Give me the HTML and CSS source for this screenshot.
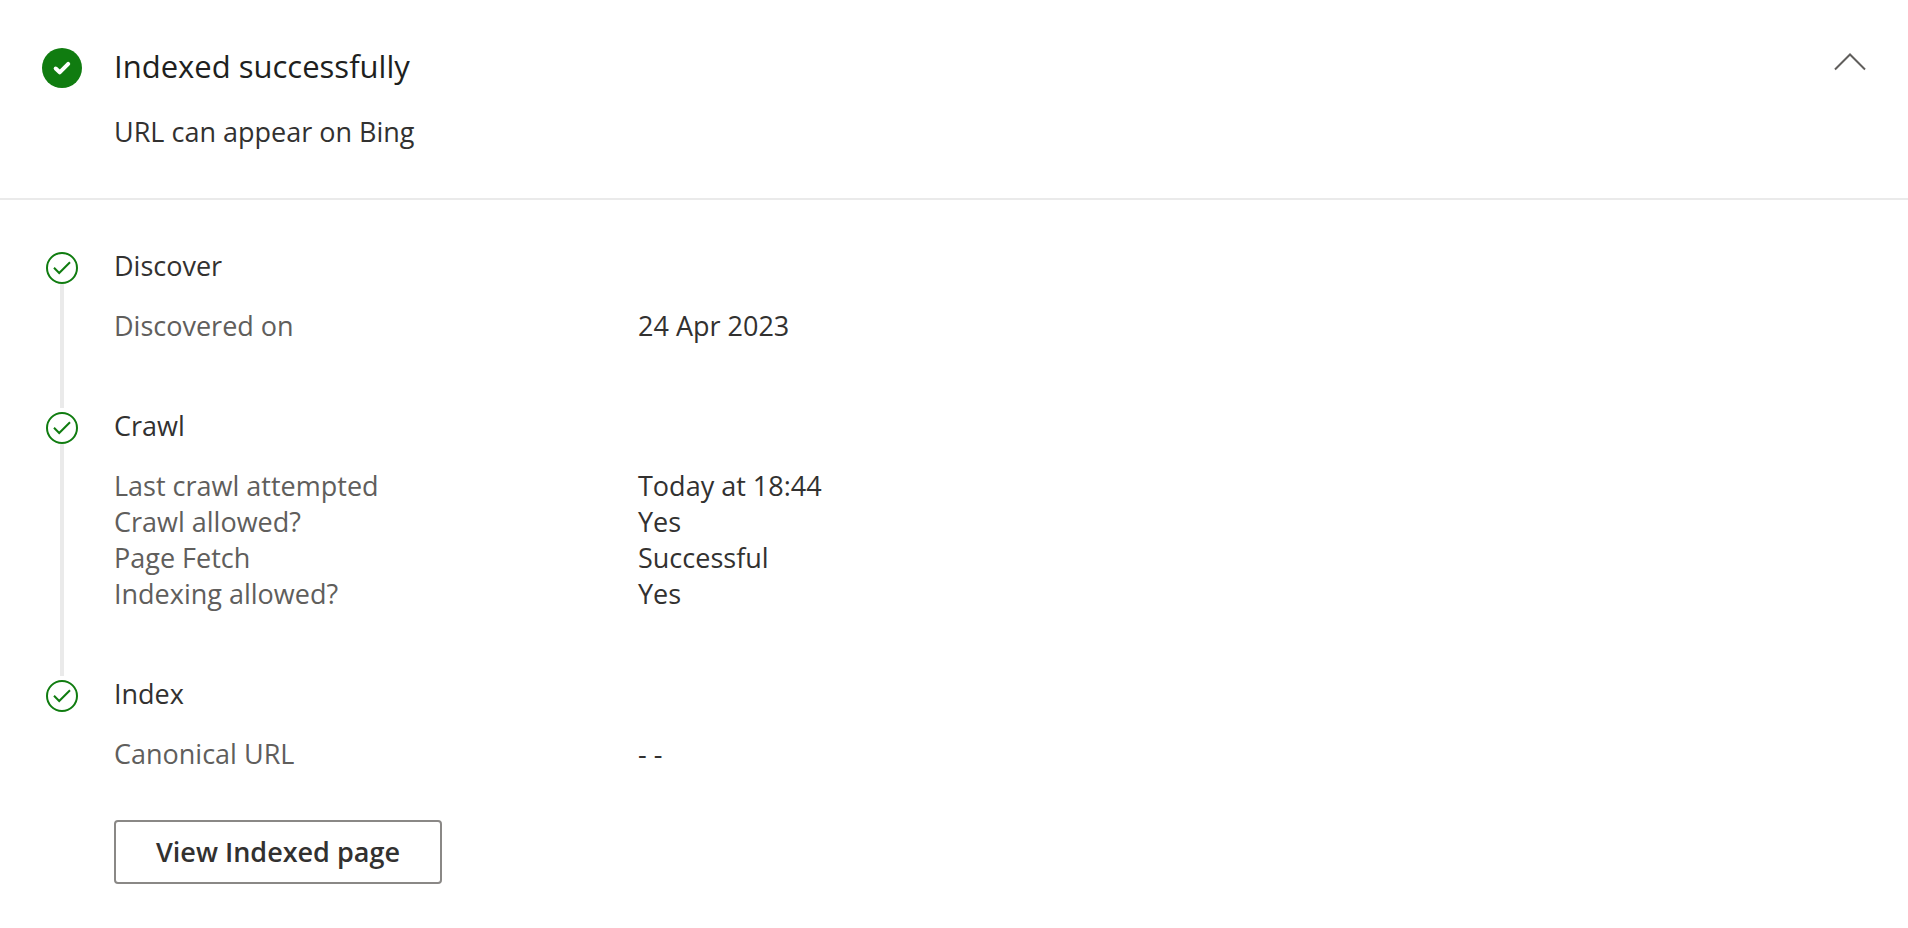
FILE: index.html
```
<!DOCTYPE html>
<html lang="en">
    <head>
        <meta charset="utf-8">
        <title>URL Inspection</title>
        <link rel="stylesheet" href="styles.css">
    </head>
    <body>
        <header class="summary">
            <svg class="status-icon" viewBox="0 0 40 40" aria-hidden="true">
                <circle cx="20" cy="20" r="20"/>
                <path d="M13.7 20.5 L17.7 24.3 L26.2 15.8"/>
            </svg>
            <div class="summary-text">
                <h1 class="title">Indexed successfully</h1>
                <p class="subtitle">URL can appear on Bing</p>
            </div>
            <button class="collapse" aria-label="Collapse">
                <svg viewBox="0 0 32 18" aria-hidden="true">
                    <path d="M1 16.5 L16 1.5 L31 16.5"/>
                </svg>
            </button>
        </header>
        <main class="steps">
            <section class="step">
                <div class="marker">
                    <svg viewBox="0 0 32 32" aria-hidden="true">
                        <circle cx="16" cy="16" r="15"/>
                        <path d="M8 15.8 L13.2 21 L24 10.2"/>
                    </svg>
                    <div class="line"></div>
                </div>
                <div class="step-body">
                    <h2 class="step-title">Discover</h2>
                    <dl class="details">
                        <dt>Discovered on</dt>
                        <dd>24 Apr 2023</dd>
                    </dl>
                </div>
            </section>
            <section class="step">
                <div class="marker">
                    <svg viewBox="0 0 32 32" aria-hidden="true">
                        <circle cx="16" cy="16" r="15"/>
                        <path d="M8 15.8 L13.2 21 L24 10.2"/>
                    </svg>
                    <div class="line"></div>
                </div>
                <div class="step-body">
                    <h2 class="step-title">Crawl</h2>
                    <dl class="details">
                        <dt>Last crawl attempted</dt>
                        <dd>Today at 18:44</dd>
                        <dt>Crawl allowed?</dt>
                        <dd>Yes</dd>
                        <dt>Page Fetch</dt>
                        <dd>Successful</dd>
                        <dt>Indexing allowed?</dt>
                        <dd>Yes</dd>
                    </dl>
                </div>
            </section>
            <section class="step last">
                <div class="marker">
                    <svg viewBox="0 0 32 32" aria-hidden="true">
                        <circle cx="16" cy="16" r="15"/>
                        <path d="M8 15.8 L13.2 21 L24 10.2"/>
                    </svg>
                </div>
                <div class="step-body">
                    <h2 class="step-title">Index</h2>
                    <dl class="details">
                        <dt>Canonical URL</dt>
                        <dd>- -</dd>
                    </dl>
                    <button class="view-page">View Indexed page</button>
                </div>
            </section>
        </main>
    </body>
</html>
```

FILE: styles.css
```
body{
    margin: 0;
    background-color: white;
    color: rgb(50, 49, 48);
    font-family: "Open Sans", "Noto Sans", sans-serif;
    font-size: 27px;
    line-height: 36px;
}
h1, h2, p, dl, dd{
    margin: 0;
    font-weight: normal;
}
button{
    font: inherit;
    color: inherit;
    background-color: white;
    cursor: pointer;
}
.summary{
    display: flex;
    align-items: flex-start;
    padding: 48px 42px;
    border-bottom: 2px solid rgb(234, 234, 234);
}
.status-icon{
    width: 40px;
    height: 40px;
    margin-right: 32px;
    fill: rgb(16, 124, 16);
}
.status-icon path{
    fill: none;
    stroke: white;
    stroke-width: 4;
    stroke-linecap: round;
    stroke-linejoin: round;
}
.summary-text{
    display: flex;
    flex-direction: column;
    flex: 1;
    gap: 30px;
}
.title{
    font-size: 31px;
    color: rgb(32, 31, 30);
}
.collapse{
    display: flex;
    padding: 5px 0;
    border: none;
}
.collapse svg{
    width: 32px;
    height: 18px;
    fill: none;
    stroke: rgb(96, 94, 92);
    stroke-width: 2;
}
.steps{
    padding: 48px 42px 44px;
}
.step{
    display: flex;
    gap: 32px;
}
.marker{
    display: flex;
    flex-direction: column;
    align-items: center;
    width: 40px;
    padding-top: 4px;
}
.marker svg{
    width: 32px;
    height: 32px;
    fill: none;
    stroke: rgb(16, 124, 16);
    stroke-width: 2;
}
.line{
    flex: 1;
    width: 4px;
    background-color: rgb(234, 234, 234);
}
.step-body{
    flex: 1;
    padding-bottom: 64px;
}
.last .step-body{
    padding-bottom: 0;
}
.step-title{
    margin-bottom: 24px;
    font-size: inherit;
}
.details{
    display: grid;
    grid-template-columns: 524px 1fr;
}
.details dt{
    color: rgb(96, 94, 92);
}
.view-page{
    margin-top: 48px;
    padding: 12px 40px 12px;
    border: 2px solid rgb(138, 136, 134);
    border-radius: 4px;
    font-weight: 600;
}
```
